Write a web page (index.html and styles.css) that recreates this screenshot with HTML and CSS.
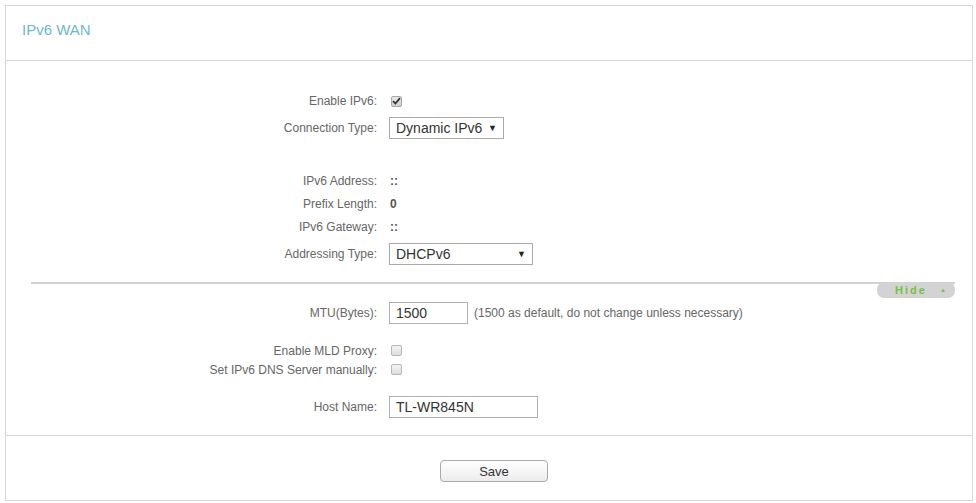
FILE: index.html
```html
<!DOCTYPE html>
<html lang="en">
<head>
  <meta charset="UTF-8">
  <title>IPv6 WAN</title>
  <link rel="stylesheet" href="styles.css">
</head>
<body>
  <div class="panel">
    <div class="panel-head">
      <h1>IPv6 WAN</h1>
    </div>

    <div class="panel-body">
      <div class="row r-check first">
        <span class="label">Enable IPv6:</span>
        <span class="box checked">
          <svg width="9" height="8" viewBox="0 0 9 8"><path d="M1 4.2 L3.4 6.5 L8 1.2" fill="none" stroke="#333" stroke-width="1.8"/></svg>
        </span>
      </div>
      <div class="row r-field">
        <span class="label">Connection Type:</span>
        <div class="select sel-conn"><span>Dynamic IPv6</span><span class="arrow">&#9660;</span></div>
      </div>

      <div class="row r-text gap-big">
        <span class="label">IPv6 Address:</span>
        <span class="value">::</span>
      </div>
      <div class="row r-text">
        <span class="label">Prefix Length:</span>
        <span class="value">0</span>
      </div>
      <div class="row r-text">
        <span class="label">IPv6 Gateway:</span>
        <span class="value">::</span>
      </div>
      <div class="row r-field">
        <span class="label">Addressing Type:</span>
        <div class="select sel-addr"><span>DHCPv6</span><span class="arrow">&#9660;</span></div>
      </div>

      <div class="adv-bar">
        <span class="toggle">Hide <span class="tri">&#9650;</span></span>
      </div>

      <div class="row r-field mtu-row">
        <span class="label">MTU(Bytes):</span>
        <div class="input inp-mtu">1500</div>
        <span class="hint">(1500 as default, do not change unless necessary)</span>
      </div>

      <div class="row r-small gap-mid">
        <span class="label">Enable MLD Proxy:</span>
        <span class="box"></span>
      </div>
      <div class="row r-small">
        <span class="label">Set IPv6 DNS Server manually:</span>
        <span class="box"></span>
      </div>

      <div class="row r-field gap-mid">
        <span class="label">Host Name:</span>
        <div class="input inp-host">TL-WR845N</div>
      </div>
    </div>

    <div class="panel-foot">
      <button class="btn-save">Save</button>
    </div>
  </div>
</body>
</html>
```

FILE: styles.css
```css
body {
  margin: 0;
  padding: 5px 3px 0 5px;
  font-family: "Liberation Sans", Arial, sans-serif;
  font-size: 12px;
  color: #666;
  background-color: #fff;
}

.panel {
  height: 494px;
  border: 1px solid #d6d6d6;
}

.panel-head {
  height: 54px;
  padding: 0 16px;
  border-bottom: 1px solid #d6d6d6;
}

.panel-head h1 {
  margin: 0;
  padding-top: 14px;
  line-height: 20px;
  font-size: 15px;
  font-weight: normal;
  color: #6db7cd;
}

.panel-body {
  padding: 29px 0 16px 0;
  border-bottom: 1px solid #d6d6d6;
}

.row {
  display: flex;
  align-items: center;
}

.r-check { height: 22px; }
.r-text { height: 22px; margin-top: 1px; }
.r-small { height: 19px; }
.r-field { height: 24px; margin-top: 4px; }

.gap-big { margin-top: 30px; }
.gap-mid { margin-top: 16px; }

.label {
  width: 371px;
  flex-shrink: 0;
  text-align: right;
  color: #666;
}

.value {
  margin-left: 13px;
  font-weight: bold;
  color: #555;
}

.box {
  margin-left: 14px;
  width: 9px;
  height: 9px;
  border: 1px solid #b5b5b5;
  border-radius: 2px;
  background: linear-gradient(#f4f4f4, #dedede);
  display: flex;
  align-items: center;
  justify-content: center;
}

.box.checked {
  background: linear-gradient(#e8e8e8, #cfcfcf);
  border-color: #a8a8a8;
}

.select,
.input {
  margin-left: 12px;
  height: 20px;
  border: 1px solid #aaa;
  background: #fff;
  font-size: 14px;
  color: #333;
  display: flex;
  align-items: center;
  padding: 0 6px;
  box-sizing: content-box;
}

.select {
  justify-content: space-between;
}

.select .arrow {
  font-size: 9px;
  color: #222;
}

.sel-conn { width: 101px; }
.sel-addr { width: 130px; }
.inp-mtu { width: 65px; border-color: #b0b0b0; }
.inp-host { width: 135px; border-color: #b0b0b0; }

.hint {
  margin-left: 6px;
  color: #666;
}

.adv-bar {
  margin: 16px 17px 0 25px;
  height: 14px;
  border-top: 2px solid #d2d2d2;
  display: flex;
  justify-content: flex-end;
}

.toggle {
  margin-top: -2px;
  width: 78px;
  height: 16px;
  box-sizing: border-box;
  padding-left: 18px;
  border-radius: 7px;
  background-color: #d3d3d3;
  color: #78c043;
  font-size: 11px;
  font-weight: bold;
  letter-spacing: 2px;
  line-height: 16px;
}

.toggle .tri {
  font-size: 6px;
  letter-spacing: 0;
  margin-left: 8px;
  vertical-align: 2px;
}

.mtu-row { margin-top: 3px; }

.panel-foot {
  padding: 24px 0 0 10px;
  text-align: center;
}

.btn-save {
  width: 108px;
  height: 22px;
  border: 1px solid #aaa;
  border-radius: 4px;
  background: linear-gradient(#ffffff, #ececec);
  font-family: "Liberation Sans", Arial, sans-serif;
  font-size: 13px;
  color: #333;
  padding: 0;
}
```
